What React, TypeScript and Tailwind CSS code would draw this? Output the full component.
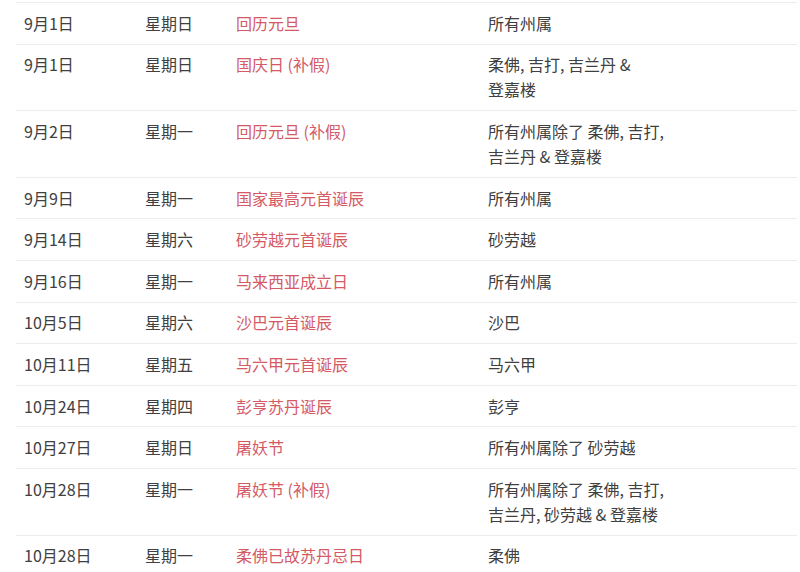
import React from "react";

type Row = { date: string; day: string; name: string; states: string[] };

const rows: Row[] = [
  { date: "9月1日", day: "星期日", name: "回历元旦", states: ["所有州属"] },
  { date: "9月1日", day: "星期日", name: "国庆日 (补假)", states: ["柔佛, 吉打, 吉兰丹 &", "登嘉楼"] },
  { date: "9月2日", day: "星期一", name: "回历元旦 (补假)", states: ["所有州属除了 柔佛, 吉打,", "吉兰丹 & 登嘉楼"] },
  { date: "9月9日", day: "星期一", name: "国家最高元首诞辰", states: ["所有州属"] },
  { date: "9月14日", day: "星期六", name: "砂劳越元首诞辰", states: ["砂劳越"] },
  { date: "9月16日", day: "星期一", name: "马来西亚成立日", states: ["所有州属"] },
  { date: "10月5日", day: "星期六", name: "沙巴元首诞辰", states: ["沙巴"] },
  { date: "10月11日", day: "星期五", name: "马六甲元首诞辰", states: ["马六甲"] },
  { date: "10月24日", day: "星期四", name: "彭亨苏丹诞辰", states: ["彭亨"] },
  { date: "10月27日", day: "星期日", name: "屠妖节", states: ["所有州属除了 砂劳越"] },
  { date: "10月28日", day: "星期一", name: "屠妖节 (补假)", states: ["所有州属除了 柔佛, 吉打,", "吉兰丹, 砂劳越 & 登嘉楼"] },
  { date: "10月28日", day: "星期一", name: "柔佛已故苏丹忌日", states: ["柔佛"] },
];

export default function App() {
  return (
    <div
      className="w-[800px] h-[572px] overflow-hidden bg-white pt-[2px] text-[16px] leading-[25px] text-[#404040]"
      style={{ fontFamily: '"Noto Sans CJK SC", "Noto Sans", sans-serif' }}
    >
      <div className="ml-4 w-[781px]">
        {rows.map((r, i) => (
          <div
            key={i}
            className="grid grid-cols-[121px_91px_252px_1fr] border-t border-[#ececec] py-[7.8px]"
          >
            <div className="pl-2">{r.date}</div>
            <div className="pl-2">{r.day}</div>
            <div className="pl-2 text-[#d45a66]">{r.name}</div>
            <div className="pl-2">
              {r.states.map((s, j) => (
                <div key={j} className="whitespace-pre">{s}</div>
              ))}
            </div>
          </div>
        ))}
      </div>
    </div>
  );
}
